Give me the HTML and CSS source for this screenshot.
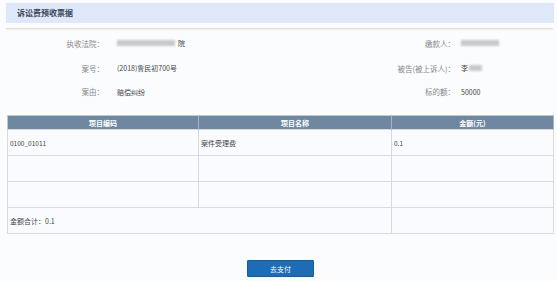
FILE: index.html
```html
<!DOCTYPE html>
<html lang="zh-CN">
<head>
  <meta charset="UTF-8">
  <meta name="viewport" content="width=device-width, initial-scale=1.0">
  <title>诉讼费预收票据</title>
  <link rel="stylesheet" href="styles.css">
</head>
<body>
  <div class="page">
    <div class="title-bar">诉讼费预收票据</div>
    <div class="title-line"></div>

    <div class="info">
      <div class="label">执收法院：</div>
      <div class="value"><span class="blur wide"></span>院</div>
      <div class="label">缴款人：</div>
      <div class="value right"><span class="blur mid"></span></div>

      <div class="label">案号：</div>
      <div class="value">(2018)鲁民初700号</div>
      <div class="label">被告(被上诉人)：</div>
      <div class="value right">李<span class="blur small"></span></div>

      <div class="label">案由：</div>
      <div class="value">赔偿纠纷</div>
      <div class="label">标的额：</div>
      <div class="value right">50000</div>
    </div>

    <table class="fee-table">
      <thead>
        <tr>
          <th class="col-code">项目编码</th>
          <th class="col-name">项目名称</th>
          <th>金额(元)</th>
        </tr>
      </thead>
      <tbody>
        <tr>
          <td>0100_01011</td>
          <td class="cn">案件受理费</td>
          <td>0.1</td>
        </tr>
        <tr>
          <td></td>
          <td></td>
          <td></td>
        </tr>
        <tr>
          <td></td>
          <td></td>
          <td></td>
        </tr>
        <tr>
          <td colspan="2" class="cn">金额合计：0.1</td>
          <td></td>
        </tr>
      </tbody>
    </table>

    <div class="actions">
      <button class="pay-btn">去支付</button>
    </div>
  </div>
</body>
</html>
```

FILE: styles.css
```css
body {
  margin: 0;
  background-color: #fbfcfe;
  font-family: "Noto Sans CJK SC", "Noto Sans", sans-serif;
  color: #555;
}

.page {
  width: 557px;
  height: 281px;
  padding-top: 3px;
  box-sizing: border-box;
}

.title-bar {
  margin: 0 3px 0 6px;
  height: 20px;
  line-height: 20px;
  padding-left: 11px;
  background-color: #dfe8f9;
  font-size: 8px;
  font-weight: bold;
  color: #3a4656;
}

.title-line {
  margin: 5px 4px 0 6px;
  height: 1px;
  background-color: #eadccb;
  box-shadow: 0 1px 1px #f3ece3;
}

.info {
  display: grid;
  grid-template-columns: 104px 276px 75px 1fr;
  grid-template-rows: 26px 24px 23px;
  margin-top: 1px;
  font-size: 7px;
  align-items: center;
}

.label {
  text-align: right;
  font-size: 7.5px;
  color: #888;
}

.value {
  padding-left: 13px;
  color: #444;
  display: flex;
  align-items: center;
}

.value.right {
  padding-left: 6px;
}

.blur {
  display: inline-block;
  height: 6px;
  background-color: #c9c9cc;
  filter: blur(1.2px);
}

.blur.wide {
  width: 58px;
  margin-right: 3px;
}

.blur.mid {
  width: 38px;
}

.blur.small {
  width: 13px;
  margin-left: 1px;
}

.fee-table {
  margin: 12px 3px 0 7px;
  width: 547px;
  border-collapse: collapse;
  border: 1px solid #c3c8cf;
  font-size: 6.5px;
  color: #444;
}

.fee-table th {
  height: 13px;
  padding: 0;
  background-color: #6f88a2;
  color: #fff;
  font-size: 7px;
  font-weight: bold;
  border-right: 1px solid #a6b4c3;
}

.col-code {
  width: 190px;
}

.col-name {
  width: 192px;
}

.fee-table td {
  height: 25px;
  padding: 0 2px;
  background-color: #f9fbfe;
  border: 1px solid #d7dbe1;
  vertical-align: middle;
}

.fee-table td.cn {
  font-size: 7px;
}

.actions {
  display: flex;
  justify-content: center;
  margin: 26px 0 0 7px;
  width: 547px;
}

.pay-btn {
  width: 67px;
  height: 17px;
  padding: 0;
  border: 1px solid #155d9e;
  border-radius: 1px;
  background-color: #1d6db6;
  color: #fff;
  font-family: "Noto Sans CJK SC", sans-serif;
  font-size: 7px;
}
```
